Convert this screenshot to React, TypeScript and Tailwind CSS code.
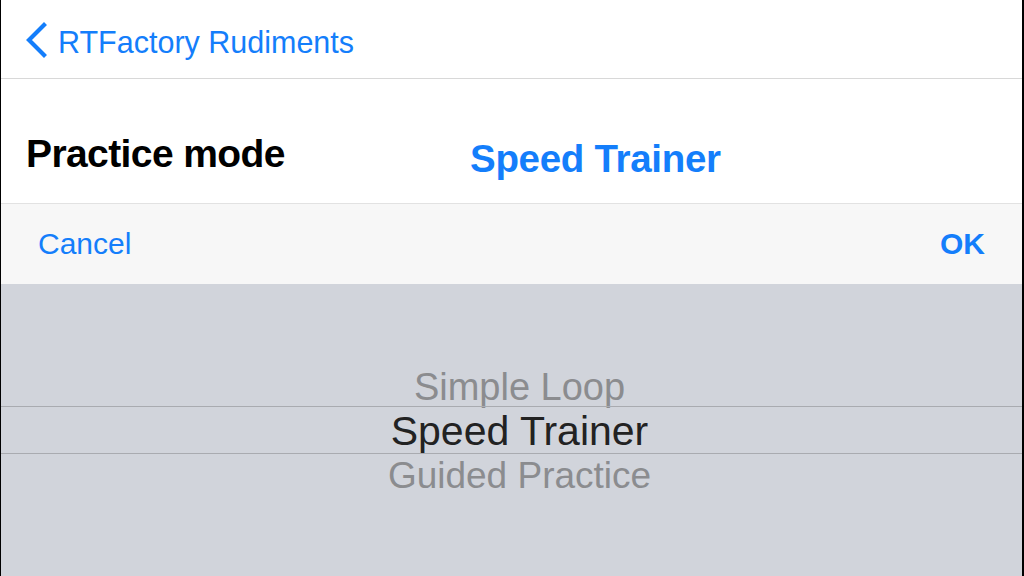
import React from "react";

export default function App() {
  const font = { fontFamily: '"Liberation Sans", Arial, sans-serif' };
  return (
    <div className="w-[1024px] h-[576px] overflow-hidden flex bg-black" style={font}>
      <div className="ml-[1px] mr-[2px] flex-1 flex flex-col bg-white">
        {/* Nav bar */}
        <div className="h-[79px] flex items-center border-b border-[#d8d8d8] shrink-0">
          <div className="flex items-center pl-[22px] pt-[6px] text-[#147efb]">
            <svg width="26" height="36" viewBox="0 0 26 36" className="mr-[9px] -mt-[4px]">
              <path d="M21 3 L6 18 L21 33" fill="none" stroke="#147efb" strokeWidth="4.2" strokeLinecap="square" />
            </svg>
            <span className="text-[30.5px] leading-none">RTFactory Rudiments</span>
          </div>
        </div>
        {/* Row */}
        <div className="h-[125px] flex items-start border-b border-[#e2e2e2] shrink-0 relative">
          <span className="pl-[25px] text-[39px] font-bold leading-none text-black mt-[55px] tracking-[-0.6px]">Practice mode</span>
          <span className="absolute left-[469px] top-[61px] text-[38.5px] font-bold leading-none text-[#147efb] tracking-[-0.3px]">Speed Trainer</span>
        </div>
        {/* Toolbar */}
        <div className="h-[80px] flex items-center justify-between bg-[#f7f7f7] px-[37px] shrink-0">
          <span className="text-[30px] text-[#147efb] leading-none">Cancel</span>
          <span className="text-[30px] text-[#147efb] leading-none font-bold">OK</span>
        </div>
        {/* Picker */}
        <div className="flex-1 bg-[#d1d4db] flex flex-col items-center">
          <div className="h-[80px] shrink-0" />
          <div className="h-[42px] w-full flex items-center justify-center text-[38px] text-[#8b8c8f] leading-none pl-[16px] pt-[4px]">Simple Loop</div>
          <div className="h-[48px] w-full flex items-center justify-center border-y border-[#a9abb0] text-[41px] text-[#222] leading-none pl-[16px] pt-[2px]">Speed Trainer</div>
          <div className="h-[42px] w-full flex items-center justify-center text-[37px] text-[#8b8c8f] leading-none pl-[16px]">Guided Practice</div>
        </div>
      </div>
    </div>
  );
}
